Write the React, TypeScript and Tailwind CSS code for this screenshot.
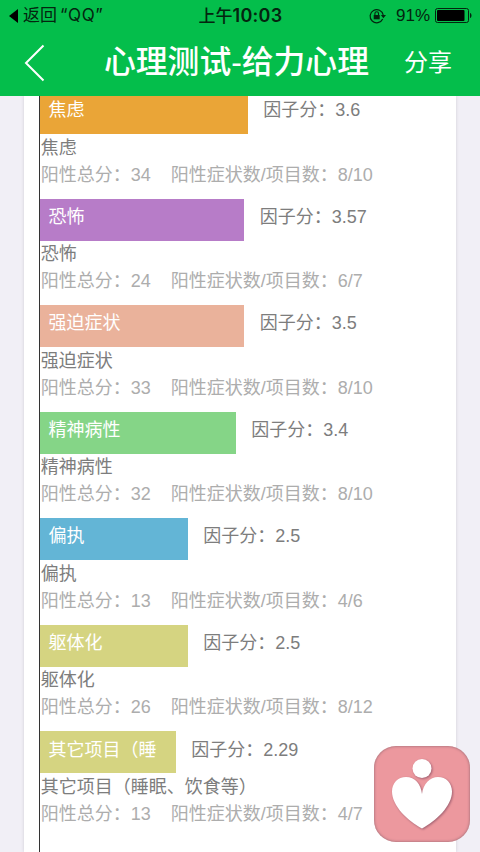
interface Factor {
  name: string;
  barLabel: string;
  score: string;
  total: number;
  ratio: string;
  bar: string;
}

const factors: Factor[] = [
  { name: '焦虑', barLabel: '焦虑', score: '3.6', total: 34, ratio: '8/10', bar: 'w-[208px] bg-[#eaa537]' },
  { name: '恐怖', barLabel: '恐怖', score: '3.57', total: 24, ratio: '6/7', bar: 'w-[204.4px] bg-[#b77cc8]' },
  { name: '强迫症状', barLabel: '强迫症状', score: '3.5', total: 33, ratio: '8/10', bar: 'w-[204.4px] bg-[#eab29b]' },
  { name: '精神病性', barLabel: '精神病性', score: '3.4', total: 32, ratio: '8/10', bar: 'w-[196px] bg-[#85d587]' },
  { name: '偏执', barLabel: '偏执', score: '2.5', total: 13, ratio: '4/6', bar: 'w-[148px] bg-[#63b5d6]' },
  { name: '躯体化', barLabel: '躯体化', score: '2.5', total: 26, ratio: '8/12', bar: 'w-[148px] bg-[#d5d481]' },
  { name: '其它项目（睡眠、饮食等）', barLabel: '其它项目（睡', score: '2.29', total: 13, ratio: '4/7', bar: 'w-[136px] bg-[#d5d481]' },
];

function StatusBar() {
  return (
    <div className="flex h-[31px] items-center font-['Inter','Noto_Sans_CJK_SC',sans-serif] text-[17px] leading-none text-[#04250f]">
      <div className="flex flex-1 items-center pl-[9px]">
        <svg width="9" height="14" viewBox="0 0 9 14" fill="#000">
          <path d="M9 0v14L0 7z" />
        </svg>
        <span className="ml-[5px] flex whitespace-nowrap">
          返回<span className="ml-[3px] tracking-[0.6px]">“QQ”</span>
        </span>
      </div>
      <div className="whitespace-nowrap font-medium">
        上午<span className="text-[18px] font-semibold tracking-[0.3px]">10:03</span>
      </div>
      <div className="flex flex-1 items-center justify-end pr-[8px]">
        <svg width="18" height="16" viewBox="0 0 18 16" fill="none" stroke="#04250f">
          <path d="M13.7 11A6.6 6.6 0 1 1 14.2 7" strokeWidth="1.2" />
          <path d="M11.8 7h5.2l-2.6 3.2z" fill="#04250f" stroke="none" />
          <rect x="4.7" y="7" width="6" height="4.3" fill="#04250f" stroke="none" />
          <path d="M5.900 7V5.600a1.800 1.800 0 0 1 3.600 0V7" strokeWidth="1.1" />
        </svg>
        <span className="ml-[9px] font-['Liberation_Sans',sans-serif]">91%</span>
        <svg className="ml-[5px]" width="37" height="15" viewBox="0 0 37 15">
          <rect x=".5" y=".5" width="33" height="14" rx="2" fill="none" stroke="#04250f" />
          <rect x="2" y="2" width="27.5" height="11" rx="1" fill="#000" />
          <path d="M35 5c2 .6 2 4.400 0 5z" fill="#04250f" />
        </svg>
      </div>
    </div>
  );
}

function Header() {
  return (
    <header className="relative z-10 h-24 shrink-0 bg-[#04be4b]">
      <StatusBar />
      <div className="flex h-[64px] items-center text-white">
        <svg className="ml-[24px]" width="21" height="38" viewBox="0 0 21 38" fill="none" stroke="#fff" strokeWidth="2">
          <path d="M19.500 1.500L2 19l17.500 17.500" />
        </svg>
        <h1 className="ml-[59px] whitespace-nowrap text-[31.800px] font-medium leading-none">心理测试-给力心理</h1>
        <button className="ml-auto mr-[28px] text-[24px] leading-none">分享</button>
      </div>
    </header>
  );
}

function FactorRow({ factor }: { factor: Factor }) {
  return (
    <li className="h-[106.550px] whitespace-nowrap text-[18px] leading-[27px]">
      <div className="flex h-[42px]">
        <div className={`h-full shrink-0 pl-[8.500px] pt-[5.300px] text-white ${factor.bar}`}>{factor.barLabel}</div>
        <div className="ml-[15.300px] pt-[5.300px] text-[#7d7d7d]">因子分：{factor.score}</div>
      </div>
      <div className="pl-[0.700px] pt-[0.700px]">
        <div className="text-[#7d7d7d]">{factor.name}</div>
        <div className="flex gap-5 text-[#adadad]">
          <span>阳性总分：{factor.total}</span>
          <span>阳性症状数/项目数：{factor.ratio}</span>
        </div>
      </div>
    </li>
  );
}

function HeartButton() {
  return (
    <button className="absolute left-[374px] top-[746px] h-24 w-24 rounded-[22px] bg-[#ec989e] shadow-[inset_0_0_3px_#8c626c]">
      <svg width="96" height="96" viewBox="0 0 96 96" fill="#fff" className="drop-shadow-[1px_1px_1px_#a06070]">
        <circle cx="48" cy="22.500" r="9.500" />
        <path d="M48 82.500C34 75 18 60 18 45.500C18 37 24 31 32 31C41 31 47 38 48 48C49 38 56 31 64 31C72 31 78 37 78 45.500C78 60 62 75 48 82.500z" />
      </svg>
    </button>
  );
}

export default function App() {
  return (
    <div className="relative flex h-[852px] w-[480px] flex-col overflow-hidden bg-[#f1eff6] font-['Liberation_Sans','Noto_Sans_CJK_SC',sans-serif]">
      <Header />
      <main className="mx-6 min-h-0 flex-1 bg-white pl-[15px] shadow-[0_0_3px_#cfcdd6]">
        <ul className="-mt-[4px] h-[770px] border-l border-[#333]">
          {factors.map((factor) => (
            <FactorRow key={factor.name} factor={factor} />
          ))}
        </ul>
      </main>
      <HeartButton />
    </div>
  );
}
